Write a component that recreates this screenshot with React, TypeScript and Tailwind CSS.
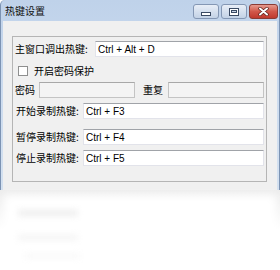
import React from "react"

const cjk = { fontFamily: '"Noto Sans CJK SC", "Noto Sans", sans-serif' }
const latin = { fontFamily: '"Liberation Sans", Arial, sans-serif' }

function TextBox({ value, className }: { value?: string; className: string }) {
  return (
    <div
      className={`h-[16px] bg-white border border-[#e2e3ea] border-t-[#a0a3a8] flex items-center pl-[2px] text-[10px] text-black ${className}`}
      style={latin}
    >
      {value}
    </div>
  )
}

function DisabledBox({ className }: { className: string }) {
  return <div className={`h-[16px] bg-[#f4f4f4] border border-[#c4c4c4] border-t-[#a8a8a8] ${className}`} />
}

function Label({ children, className = "" }: { children: React.ReactNode; className?: string }) {
  return (
    <span className={`text-[10px] leading-none text-black whitespace-nowrap ${className}`} style={cjk}>
      {children}
    </span>
  )
}

export default function App() {
  return (
    <div className="w-[280px] h-[270px] bg-white relative overflow-hidden">
      {/* window */}
      <div className="h-[190px] flex flex-col bg-gradient-to-b from-[#bfd2ea] via-[#cddcef] to-[#d4e1f0] rounded-t-[5px] border-x border-[#7c93b3]">
        <div className="h-[21px] flex items-start">
          <span className="mt-[6px] ml-[4px] text-[10px] leading-none text-[#111]" style={cjk}>
            热键设置
          </span>
          <div className="ml-auto mt-[4px] flex gap-[2px] mr-[1px]">
            <div className="w-[26px] h-[15px] rounded-[3px] border border-[#8497b4] bg-gradient-to-b from-[#e8eef7] to-[#c3d2e6] flex items-center justify-center">
              <div className="w-[10px] h-[4px] mt-[4px] bg-white border border-[#3a4a63]" />
            </div>
            <div className="w-[26px] h-[15px] rounded-[3px] border border-[#8497b4] bg-gradient-to-b from-[#e8eef7] to-[#c3d2e6] flex items-center justify-center">
              <div className="w-[10px] h-[8px] border border-[#3a4a63] bg-white flex items-center justify-center">
                <div className="w-[6px] h-[3px] border border-[#3a4a63] bg-[#c8d4e6]" />
              </div>
            </div>
            <div className="w-[29px] h-[15px] rounded-[3px] border border-[#8a3b35] bg-gradient-to-b from-[#e59a8f] via-[#d1574a] to-[#c0392e] flex items-center justify-center">
              <svg width="11" height="9" viewBox="0 0 11 9">
                <path d="M2 1.5 L9 7.5 M9 1.5 L2 7.5" stroke="#5a1f1a" strokeWidth="3.4" strokeLinecap="round" />
                <path d="M2 1.5 L9 7.5 M9 1.5 L2 7.5" stroke="#ffffff" strokeWidth="2" strokeLinecap="round" />
              </svg>
            </div>
          </div>
        </div>
        <div className="flex-1 mx-[2px] bg-[#f0f0f0] pt-[15px] pl-[9px] pr-[10px]">
          <div className="border border-[#b5b5b5] h-[146px] pl-[2px] pr-[2px] flex flex-col">
            <div className="mt-[4px] h-[16px] flex items-center">
              <Label>主窗口调出热键:</Label>
              <TextBox value="Ctrl + Alt + D" className="ml-auto w-[169px]" />
            </div>
            <div className="mt-[6px] h-[16px] flex items-center">
              <div className="ml-[3px] w-[10px] h-[10px] bg-white border border-[#8e8f8f]" />
              <Label className="ml-[6px]">开启密码保护</Label>
            </div>
            <div className="mt-[3px] h-[16px] flex items-center">
              <Label>密码</Label>
              <DisabledBox className="ml-[4px] w-[96px]" />
              <Label className="ml-[8px]">重复</Label>
              <DisabledBox className="ml-[5px] w-[96px]" />
            </div>
            <div className="mt-[5px] h-[16px] flex items-center">
              <Label className="ml-[1px]">开始录制热键:</Label>
              <TextBox value="Ctrl + F3" className="ml-auto w-[181px]" />
            </div>
            <div className="mt-[10px] h-[16px] flex items-center">
              <Label className="ml-[1px]">暂停录制热键:</Label>
              <TextBox value="Ctrl + F4" className="ml-auto w-[181px]" />
            </div>
            <div className="mt-[5px] h-[16px] flex items-center">
              <Label className="ml-[1px]">停止录制热键:</Label>
              <TextBox value="Ctrl + F5" className="ml-auto w-[181px]" />
            </div>
          </div>
        </div>
      </div>
      {/* faded reflection */}
      <div className="absolute left-0 top-[190px] w-[280px] h-[80px] bg-gradient-to-b from-[#ececec] via-white to-white">
        <div className="absolute left-[4px] top-[5px] w-[272px] h-[40px] bg-white blur-[4px]" />
        <div className="absolute left-[18px] top-[20px] w-[60px] h-[6px] bg-[#ededed] blur-[3px]" />
        <div className="absolute left-[18px] top-[45px] w-[60px] h-[5px] bg-[#f3f3f3] blur-[3px]" />
        <div className="absolute left-[25px] top-[64px] w-[55px] h-[4px] bg-[#f7f7f7] blur-[3px]" />
      </div>
    </div>
  )
}
